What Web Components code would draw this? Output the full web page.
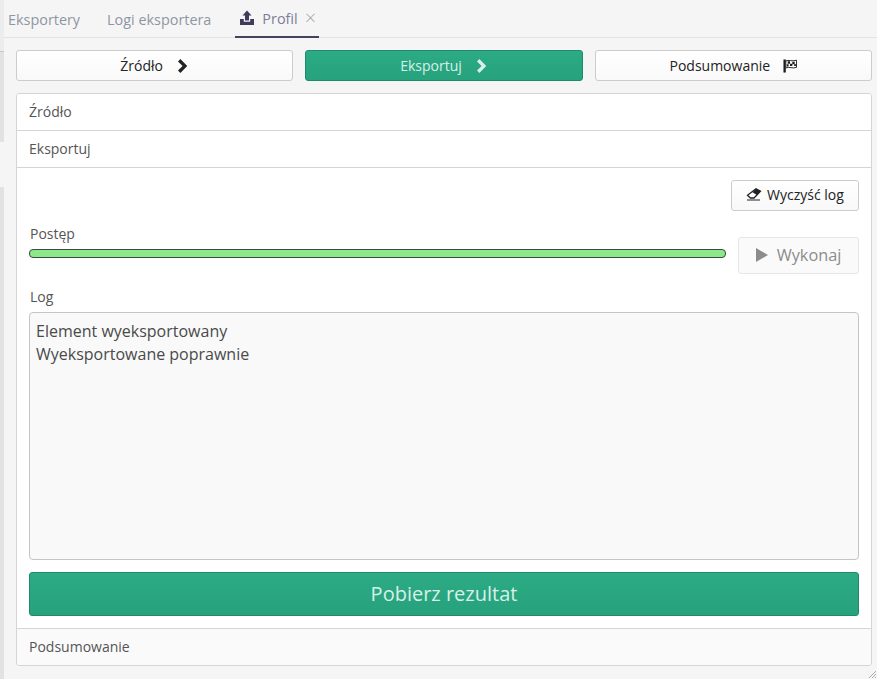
<!DOCTYPE html>
<html lang="pl">
<head>
<meta charset="utf-8">
<title>Profil</title>
<style>
html, body { margin: 0; height: 100%; }
body {
	background: #f5f5f5;
	font-family: "Open Sans", sans-serif;
	font-size: 14px;
	color: #333;
	overflow: hidden;
}
</style>
</head>
<body>
<export-app></export-app>

<script>
const icons = {
	chevron: `<svg width="12" height="14" viewBox="0 0 12 14"><path d="M3.400 0 10.200 7 3.400 14 1 11.600 5.600 7 1 2.400Z" fill="currentColor"/></svg>`,
	flag: `<svg width="14" height="14" viewBox="0 0 15 14"><rect x="0.500" y="0" width="2.500" height="14" fill="#1c1c1c"/><path d="M3 1.500C6 0 9 2.500 14.500 0.800V8.500C10 10 7 7.500 3 9Z" fill="#fff" stroke="#1c1c1c"/><path d="M5 2h2.500v2.500H5zM10 2.500h2.500V5H10zM7.500 4.500H10V7H7.500zM12 5h2v2h-2zM4 5h2v2.500H4z" fill="#1c1c1c"/></svg>`,
	upload: `<svg width="16" height="16" viewBox="0 0 16 16"><path d="M8 0.500 12.500 5.500H10V10.500H6V5.500H3.500Z" fill="#3f3b5b"/><path d="M1 9H4.800V11.800H11.200V9H15V15H1Z" fill="#3f3b5b"/></svg>`,
	eraser: `<svg width="16" height="13" viewBox="0 0 16 13"><path d="M10 0.800 14.500 3.200 8 10H4.500L1.500 7.200Z" fill="#fff" stroke="#222" stroke-width="1.300"/><path d="M10 0.800 14.500 3.200 10.800 7 6.500 4.300Z" fill="#222"/><path d="M1 12H14" stroke="#222" stroke-width="1.200"/></svg>`,
	play: `<svg width="12" height="14" viewBox="0 0 12 14"><path d="M0 0 12 7 0 14Z" fill="#8c8c8c"/></svg>`
};

class TabBar extends HTMLElement {
	constructor() {
		super().attachShadow({ mode: "open" }).innerHTML = `
<style>
:host {
	display: flex;
	align-items: stretch;
	height: 38px;
	box-sizing: border-box;
	border-bottom: 1px solid #e3e3e3;
	color: #8f96a3;
	font-size: 14.4px;
}
.tab {
	display: flex;
	align-items: center;
	height: 38px;
	box-sizing: border-box;
}
.one { margin-left: 8px; }
.two { margin-left: 27px; }
.active {
	margin-left: 24px;
	padding: 0 0 0 4px;
	width: 84px;
	gap: 7px;
	border-bottom: 2px solid #45415f;
	color: #7d7d96;
}
.close { color: #a9a9a9; font-size: 20px; line-height: 1; font-weight: 300; }
svg { display: block; }
</style>
<div class="tab one">Eksportery</div>
<div class="tab two">Logi eksportera</div>
<div class="tab active">${icons.upload}<span>Profil</span><span class="close">×</span></div>`;
	}
}

class StepButton extends HTMLElement {
	constructor() {
		super().attachShadow({ mode: "open" }).innerHTML = `
<style>
:host {
	display: flex;
	align-items: center;
	justify-content: center;
	gap: 14px;
	height: 31px;
	box-sizing: border-box;
	flex: 1 1 0;
	border: 1px solid #ccc;
	border-radius: 3px;
	background: linear-gradient(#fff, #f9f9f9);
	color: #222;
	font-size: 14px;
}
:host([active]) {
	background: linear-gradient(#2cab85, #26a27c);
	border-color: #1f8a69;
	color: #d8f0e8;
}
:host([flag]) { gap: 13px; }
::slotted(svg) { display: block; }
</style>
<slot></slot><slot name="icon"></slot>`;
	}
}

class PanelHeader extends HTMLElement {
	constructor() {
		super().attachShadow({ mode: "open" }).innerHTML = `
<style>
:host {
	display: flex;
	align-items: center;
	height: 37px;
	box-sizing: border-box;
	padding: 0 0 2px 12px;
	color: #555;
	font-size: 14px;
	background: #fff;
	border-bottom: 1px solid #d5d5d5;
}
:host([last]) { background: #fafafa; border-bottom: 0; border-top: 1px solid #d5d5d5; height: 37px; }
</style>
<slot></slot>`;
	}
}

class PlainButton extends HTMLElement {
	constructor() {
		super().attachShadow({ mode: "open" }).innerHTML = `
<style>
:host {
	display: inline-flex;
	align-items: center;
	justify-content: center;
	box-sizing: border-box;
	padding-bottom: 2px;
	border: 1px solid #ccc;
	border-radius: 3px;
	background: linear-gradient(#fff, #f8f8f8);
	color: #222;
}
:host([clear]) { width: 128px; height: 31px; gap: 5px; font-size: 14px; }
:host([disabled]) {
	width: 121px; height: 37px; gap: 9px; font-size: 16.3px;
	border-color: #e6e6e6; color: #8c8c8c; background: #fafafa;
}
::slotted(svg) { display: block; }
</style>
<slot name="icon"></slot><slot></slot>`;
	}
}

class ProgressRow extends HTMLElement {
	constructor() {
		super().attachShadow({ mode: "open" }).innerHTML = `
<style>
:host { display: flex; gap: 12px; align-items: flex-start; }
.left { flex: 1; min-width: 0; }
.label { display: block; font-size: 14px; line-height: 19px; color: #555; margin: 0 0 6px 1px; }
.bar {
	height: 9px;
	box-sizing: border-box;
	border: 1px solid #3b4a44;
	border-radius: 4px;
	background: #8de88a;
}
.side { margin-top: 13px; display: flex; }
</style>
<div class="left"><span class="label">Postęp</span><div class="bar"></div></div>
<div class="side"><slot></slot></div>`;
	}
}

class LogBox extends HTMLElement {
	constructor() {
		super().attachShadow({ mode: "open" }).innerHTML = `
<style>
:host { display: block; }
.label { display: block; font-size: 14px; line-height: 19px; color: #555; margin: 0 0 6px 1px; }
.box {
	height: 248px;
	box-sizing: border-box;
	border: 1px solid #c4c4c4;
	border-radius: 4px;
	background: #f9f9f9;
	padding: 7px 6px;
	font-size: 16px;
	line-height: 23px;
	color: #4a4a4a;
}
.box div { white-space: nowrap; }
</style>
<span class="label">Log</span>
<div class="box"><slot></slot></div>`;
	}
}

class DownloadButton extends HTMLElement {
	constructor() {
		super().attachShadow({ mode: "open" }).innerHTML = `
<style>
:host {
	display: flex;
	align-items: center;
	justify-content: center;
	height: 44px;
	box-sizing: border-box;
	padding-bottom: 2px;
	border: 1px solid #1f8a69;
	border-radius: 3px;
	background: linear-gradient(#2cab85, #26a27c);
	color: #d8f0e8;
	font-size: 20px;
}
</style>
<slot></slot>`;
	}
}

class ExportPanel extends HTMLElement {
	constructor() {
		super().attachShadow({ mode: "open" }).innerHTML = `
<style>
:host {
	display: block;
	border: 1px solid #d5d5d5;
	border-radius: 3px;
	background: #fff;
	overflow: hidden;
}
.body {
	padding: 12px 12px 12px;
	display: flex;
	flex-direction: column;
	height: 460px;
	box-sizing: border-box;
}
.top { display: flex; justify-content: flex-end; margin-bottom: 13px; }
progress-row { margin-bottom: 13px; }
log-box { margin-bottom: 12px; }
</style>
<panel-header>Źródło</panel-header>
<panel-header>Eksportuj</panel-header>
<div class="body">
	<div class="top"><plain-button clear>${icons.eraser.replace("<svg", '<svg slot="icon"')}Wyczyść log</plain-button></div>
	<progress-row><plain-button disabled>${icons.play.replace("<svg", '<svg slot="icon"')}Wykonaj</plain-button></progress-row>
	<log-box><div>Element wyeksportowany</div><div>Wyeksportowane poprawnie</div></log-box>
	<download-button>Pobierz rezultat</download-button>
</div>
<panel-header last>Podsumowanie</panel-header>`;
	}
}

class ExportApp extends HTMLElement {
	constructor() {
		super().attachShadow({ mode: "open" }).innerHTML = `
<style>
:host { display: block; height: 679px; position: relative; }
.main { padding: 0 5px 0 16px; }
tab-bar { margin: 0 -5px 12px -16px; }
.steps { display: flex; gap: 12px; margin-bottom: 12px; }
.strip { position: absolute; left: 0; width: 4px; background: #e2e2e2; }
.grip { position: absolute; right: 0; bottom: 0; }
</style>
<!-- sliver of the window behind this one -->
<div class="strip" style="top:0;height:51px;background:#ececec"></div>
<div class="strip" style="top:51px;height:91px;border-top:1px solid #c8c8c8;box-sizing:border-box"></div>
<div class="strip" style="top:187px;bottom:0"></div>
<div class="main">
	<tab-bar></tab-bar>
	<div class="steps">
		<step-button>Źródło${icons.chevron.replace("<svg", '<svg slot="icon"')}</step-button>
		<step-button active>Eksportuj${icons.chevron.replace("<svg", '<svg slot="icon"')}</step-button>
		<step-button flag>Podsumowanie${icons.flag.replace("<svg", '<svg slot="icon"')}</step-button>
	</div>
	<export-panel></export-panel>
</div>
<svg class="grip" width="10" height="10" viewBox="0 0 10 10"><path d="M9 2 2 9M9 5 5 9M9 8 8 9" stroke="#aaa" fill="none"/></svg>`;
	}
}

customElements.define("tab-bar", TabBar);
customElements.define("step-button", StepButton);
customElements.define("panel-header", PanelHeader);
customElements.define("plain-button", PlainButton);
customElements.define("progress-row", ProgressRow);
customElements.define("log-box", LogBox);
customElements.define("download-button", DownloadButton);
customElements.define("export-panel", ExportPanel);
customElements.define("export-app", ExportApp);
</script>
</body>
</html>
